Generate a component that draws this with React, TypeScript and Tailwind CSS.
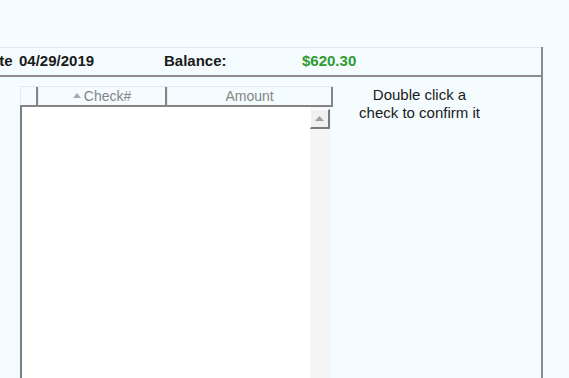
import React from 'react';

const App: React.FC = () => {
  return (
    <div className="w-[569px] h-[378px] overflow-hidden bg-[#f4fcff] text-[#1a1a1a] font-['Liberation_Sans',Arial,sans-serif]">
      <div className="h-[47px]"></div>
      <div className="w-[543px] h-[331px] border-r-2 border-[#8a8a8a] flex flex-col">
        {/* summary row */}
        <div className="h-[30px] border-t border-[#e3e9eb] border-b-2 border-b-[#8e8e8e] flex items-center text-[15px] font-bold">
          <span className="-ml-[20px] w-[39px] whitespace-nowrap">Date</span>
          <span className="w-[145px]">04/29/2019</span>
          <span className="w-[138px]">Balance:</span>
          <span className="text-[#2f9a2f]">$620.30</span>
        </div>

        <div className="flex flex-1 pt-[9px]">
          {/* check list */}
          <div className="ml-[20px] w-[313px] flex flex-col">
            <div className="h-[21px] flex border-t border-[#e2e8ea] border-b-2 border-b-[#858585] text-[14px] text-[#858585]">
              <div className="w-[18px] border-l border-[#e6ecee] border-r-2 border-r-[#858585]"></div>
              <div className="w-[129px] border-l border-[#e6ecee] border-r-2 border-r-[#858585] flex items-center justify-center">
                <svg width="8" height="5" viewBox="0 0 8 5" className="mr-[3px] mb-[1px]">
                  <path d="M0 5 L4 0 L8 5 Z" fill="#a8a8a8" />
                </svg>
                <span>Check#</span>
              </div>
              <div className="flex-1 border-l border-[#e6ecee] border-r-2 border-r-[#858585] flex items-center justify-center">
                Amount
              </div>
            </div>
            <div className="w-[311px] flex-1 border-l-2 border-[#7c7c7c] bg-white flex">
              <div className="flex-1"></div>
              <div className="w-[21px] bg-[#f5f5f5] pt-[2px]">
                <div className="w-[20px] h-[20px] bg-[#f0f0f0] border-t border-l border-white border-r-2 border-b-2 border-r-[#7a7a7a] border-b-[#7a7a7a] flex items-center justify-center">
                  <svg width="9" height="5" viewBox="0 0 9 5">
                    <path d="M0 5 L4.5 0 L9 5 Z" fill="#a0a0a0" />
                  </svg>
                </div>
              </div>
            </div>
          </div>

          {/* hint */}
          <div className="flex-1">
            <div className="ml-[10px] w-[153px] text-center text-[15px] leading-[18px]">
              Double click a<br />check to confirm it
            </div>
          </div>
        </div>
      </div>
    </div>
  );
};

export default App;
